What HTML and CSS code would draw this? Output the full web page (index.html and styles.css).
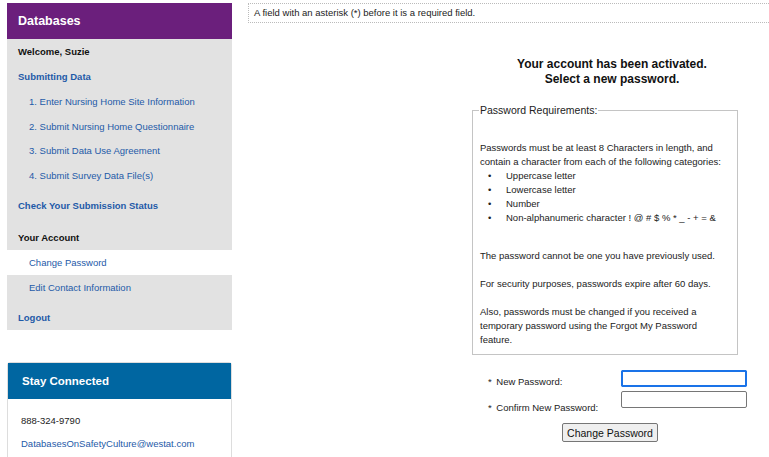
FILE: index.html
```html
<!DOCTYPE html>
<html lang="en">
<head>
  <meta charset="UTF-8" />
  <title>Change Password | Databases</title>
  <link rel="stylesheet" href="styles.css">
</head>
<body>
  <div class="page">
    <aside class="sidebar">
      <div class="side-title">Databases</div>
      <ul class="side-nav">
        <li class="welcome">Welcome, Suzie</li>
        <li class="section"><a href="#">Submitting Data</a></li>
        <li class="sub"><a href="#">1. Enter Nursing Home Site Information</a></li>
        <li class="sub"><a href="#">2. Submit Nursing Home Questionnaire</a></li>
        <li class="sub"><a href="#">3. Submit Data Use Agreement</a></li>
        <li class="sub"><a href="#">4. Submit Survey Data File(s)</a></li>
        <li class="section check"><a href="#">Check Your Submission Status</a></li>
        <li class="section account">Your Account</li>
        <li class="sub active"><a href="#">Change Password</a></li>
        <li class="sub"><a href="#">Edit Contact Information</a></li>
        <li class="section logout"><a href="#">Logout</a></li>
      </ul>

      <div class="connect">
        <div class="connect-title">Stay Connected</div>
        <div class="connect-body">
          <p>888-324-9790</p>
          <p><a href="#">DatabasesOnSafetyCulture@westat.com</a></p>
        </div>
      </div>
    </aside>

    <main class="main">
      <div class="note">A field with an asterisk (*) before it is a required field.</div>

      <div class="pw-box">
        <h2>Your account has been activated.<br>Select a new password.</h2>

        <fieldset class="reqs">
          <legend>Password Requirements:</legend>
          <p class="first">Passwords must be at least 8 Characters in length, and contain a character from each of the following categories:</p>
          <ul>
            <li>Uppercase letter</li>
            <li>Lowercase letter</li>
            <li>Number</li>
            <li>Non-alphanumeric character ! @ # $ % * _ - + = &amp;</li>
          </ul>
          <p class="gap">The password cannot be one you have previously used.</p>
          <p>For security purposes, passwords expire after 60 days.</p>
          <p class="last">Also, passwords must be changed if you received a temporary password using the Forgot My Password feature.</p>
        </fieldset>

        <form class="pw-form">
          <label for="newpw" class="high"><span class="star">*</span> New Password:</label>
          <input type="password" id="newpw" class="focus" />
          <label for="confpw" class="low"><span class="star">*</span> Confirm New Password:</label>
          <input type="password" id="confpw" />
          <div class="actions">
            <button type="button">Change Password</button>
          </div>
        </form>
      </div>
    </main>
  </div>
</body>
</html>
```

FILE: styles.css
```css
body {
  margin: 0;
  font-family: 'Liberation Sans', Arial, sans-serif;
  color: #222;
  background: #fff;
  overflow: hidden;
}
a {
  color: #1e5aa8;
  text-decoration: none;
}
.page {
  display: flex;
  padding: 3px 0 0 7px;
}
.sidebar {
  width: 225px;
  flex-shrink: 0;
}
.side-title {
  background: #6b1f7c;
  color: #fff;
  font-size: 12.5px;
  font-weight: bold;
  height: 36px;
  line-height: 36px;
  padding-left: 11px;
}
.side-nav {
  list-style: none;
  margin: 0;
  padding: 0;
  background: #e2e2e2;
  font-size: 9.5px;
}
.side-nav li {
  line-height: 24px;
  padding: 1px 0 0 11px;
}
.side-nav .welcome,
.side-nav .section {
  font-weight: bold;
  color: #111;
}
.side-nav .sub {
  line-height: 22.5px;
  padding: 2px 0 0 22px;
}
.side-nav .check {
  margin-top: 6px;
}
.side-nav .account {
  margin-top: 7px;
}
.side-nav .active {
  background: #fff;
}
.side-nav .logout {
  margin-top: 6px;
}
.connect {
  margin-top: 32px;
  border: 1px solid #ddd;
  border-radius: 3px;
  height: 120px;
}
.connect-title {
  background: #0066a1;
  color: #fff;
  font-size: 11.5px;
  font-weight: bold;
  height: 36px;
  line-height: 37px;
  padding-left: 14px;
}
.connect-body {
  padding: 16px 13px 0;
  font-size: 9.5px;
}
.connect-body p {
  margin: 0 0 11px;
  line-height: 12px;
}
.main {
  flex: 1;
  margin-left: 16px;
}
.note {
  border: 1px dotted #bbb;
  border-right: none;
  font-size: 9.5px;
  padding: 3px 5px;
  line-height: 12px;
}
.pw-box {
  width: 280px;
  margin: 34px 0 0 224px;
}
.pw-box h2 {
  font-size: 12px;
  line-height: 15px;
  text-align: center;
  margin: 0 0 16px;
  color: #111;
}
.reqs {
  width: 266px;
  box-sizing: border-box;
  margin: 0;
  padding: 2px 7px 0;
  border: 1px solid #c4c4c4;
  font-size: 9.5px;
  line-height: 14px;
}
.reqs legend {
  font-size: 10.5px;
  padding: 0 1px;
  margin-left: -1px;
}
.reqs p {
  margin: 14px 0;
}
.reqs .first {
  margin-top: 22px;
  margin-bottom: 0;
}
.reqs ul {
  list-style: none;
  margin: 0;
  padding-left: 8px;
}
.reqs ul li::before {
  content: "\2022";
  display: inline-block;
  width: 18px;
}
.reqs .gap {
  margin-top: 24px;
}
.reqs .last {
  margin-bottom: 7px;
}
.pw-form {
  display: grid;
  grid-template-columns: 133px 126px;
  row-gap: 4px;
  margin-top: 15px;
  font-size: 9.5px;
  padding-left: 16px;
}
.pw-form label {
  align-self: center;
}
.pw-form label.high {
  padding-top: 5px;
}
.pw-form label.low {
  align-self: end;
  position: relative;
  top: 5px;
}
.star {
  margin-right: 2px;
}
.pw-form input {
  height: 17px;
  box-sizing: border-box;
  border: 1px solid #767676;
  border-radius: 2px;
  padding: 1px 2px;
  font-size: 11px;
}
.pw-form input.focus {
  outline: 2px solid #1a73e8;
  outline-offset: -2px;
  border-color: #1a73e8;
}
.actions {
  grid-column: 1 / 3;
  text-align: center;
  margin-top: 11px;
  padding-right: 15px;
}
.actions button {
  font-family: 'Liberation Sans', Arial, sans-serif;
  font-size: 10.5px;
  height: 19px;
  padding: 0 4px;
  border: 1px solid #767676;
  border-radius: 2px;
  background: #efefef;
  color: #111;
}
```
